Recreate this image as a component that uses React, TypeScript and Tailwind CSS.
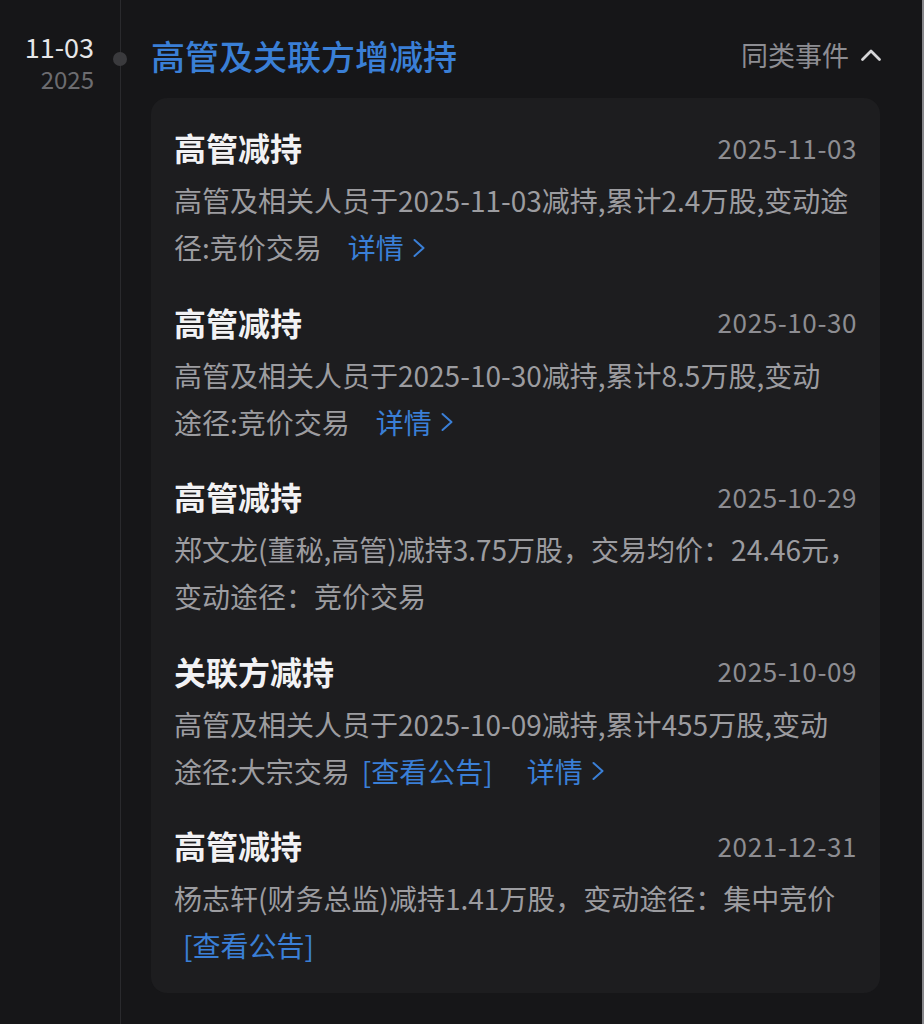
import React from 'react';

type Item = {
  title: string;
  date: string;
  line1: string;
  line2: string;
  notice?: boolean;
  detail?: boolean;
  indentNotice?: boolean;
};

const items: Item[] = [
  {
    title: '高管减持',
    date: '2025-11-03',
    line1: '高管及相关人员于2025-11-03减持,累计2.4万股,变动途',
    line2: '径:竞价交易',
    detail: true,
  },
  {
    title: '高管减持',
    date: '2025-10-30',
    line1: '高管及相关人员于2025-10-30减持,累计8.5万股,变动',
    line2: '途径:竞价交易',
    detail: true,
  },
  {
    title: '高管减持',
    date: '2025-10-29',
    line1: '郑文龙(董秘,高管)减持3.75万股，交易均价：24.46元，',
    line2: '变动途径：竞价交易',
  },
  {
    title: '关联方减持',
    date: '2025-10-09',
    line1: '高管及相关人员于2025-10-09减持,累计455万股,变动',
    line2: '途径:大宗交易',
    notice: true,
    detail: true,
  },
  {
    title: '高管减持',
    date: '2021-12-31',
    line1: '杨志轩(财务总监)减持1.41万股，变动途径：集中竞价',
    line2: '',
    notice: true,
    indentNotice: true,
  },
];

const Chevron = () => (
  <svg width="14" height="24" viewBox="0 0 14 24" className="ml-[8px]" fill="none">
    <path d="M2.5 4 L11.5 12 L2.5 20" stroke="#3a7fd6" strokeWidth="2" strokeLinecap="round" strokeLinejoin="round" />
  </svg>
);

const Detail = ({ className }: { className?: string }) => (
  <span className={`inline-flex items-center text-[#3a7fd6] ${className ?? ''}`}>
    详情
    <Chevron />
  </span>
);

const EventItem = ({ item }: { item: Item }) => (
  <div>
    <div className="flex h-[48px] items-center justify-between">
      <span className="text-[32px] font-bold text-[#f2f2f4]">{item.title}</span>
      <span className="text-[26px] tracking-[0.6px] text-[#8d8d92]">{item.date}</span>
    </div>
    <div className="mt-[6px] whitespace-nowrap text-[28px] leading-[47px] text-[#9c9ca0]">
      <div>{item.line1}</div>
      <div className="flex items-center">
        {item.line2 && <span>{item.line2}</span>}
        {item.notice && (
          <span className={`text-[#3a7fd6] ${item.indentNotice ? 'ml-[9px]' : 'ml-[12px]'}`}>[查看公告]</span>
        )}
        {item.detail && <Detail className={item.notice ? 'ml-[34px]' : 'ml-[26px]'} />}
      </div>
    </div>
  </div>
);

export default function App() {
  return (
    <div
      className="flex h-[1024px] w-[924px] overflow-hidden border-r-2 border-[#86868a] bg-[#161618]"
      style={{ fontFamily: '"Noto Sans CJK SC", "Noto Sans", sans-serif' }}
    >
      <div className="w-[120px] shrink-0 pr-[26px] pt-[32px] text-right">
        <div className="text-[27px] leading-[30px] text-[#e6e6e8]">11-03</div>
        <div className="mt-[4px] text-[24px] leading-[26px] text-[#6c6c70]">2025</div>
      </div>

      <div className="relative flex-1 border-l-[1.5px] border-[#2a2a2d] pl-[30px] pr-[46px]">
        <div className="absolute left-[-8px] top-[52px] h-[14px] w-[14px] rounded-full bg-[#3a3a3d]" />

        <div className="mt-[33px] flex h-[44px] items-center justify-between">
          <span className="text-[34px] font-medium text-[#3a7fd6]">高管及关联方增减持</span>
          <span className="flex items-center text-[27px] text-[#8d8d92]">
            同类事件
            <svg width="22" height="14" viewBox="0 0 22 14" className="ml-[11px] mr-[-2px]" fill="none">
              <path d="M2.5 11.5 L11 3 L19.5 11.5" stroke="#d6d6d8" strokeWidth="2.8" strokeLinecap="round" strokeLinejoin="round" />
            </svg>
          </span>
        </div>

        <div className="mt-[21px] flex flex-col gap-[26.5px] rounded-[16px] bg-[#1d1d1f] px-[23px] pb-[24px] pt-[25px]">
          {items.map((item, i) => (
            <EventItem key={i} item={item} />
          ))}
        </div>
      </div>
    </div>
  );
}
